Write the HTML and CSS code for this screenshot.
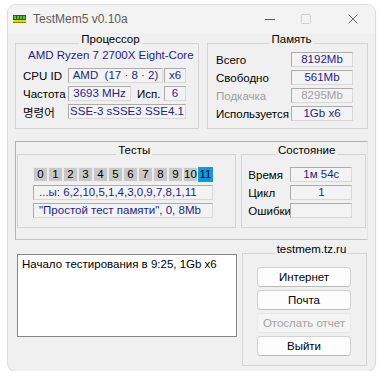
FILE: index.html
```html
<!DOCTYPE html>
<html>
<head>
<meta charset="utf-8">
<link rel="stylesheet" href="styles.css">
</head>
<body>
<div class="win">
  <div class="titlebar">
    <svg class="appicon" width="13" height="8" viewBox="0 0 13 8">
      <rect x="0" y="0" width="13" height="5" fill="#1f5f1f"/>
      <rect x="1" y="1" width="2" height="3" fill="#5fbf3f"/>
      <rect x="4" y="1" width="2" height="3" fill="#5fbf3f"/>
      <rect x="7" y="1" width="2" height="3" fill="#5fbf3f"/>
      <rect x="10" y="1" width="2" height="3" fill="#5fbf3f"/>
      <rect x="0" y="5" width="13" height="3" fill="#e6d800"/>
      <rect x="0" y="7" width="13" height="1" fill="#8a7f00"/>
    </svg>
    <span class="title">TestMem5 v0.10a</span>
    <div class="ctls">
      <span class="ctl min"><svg width="10" height="10" viewBox="0 0 10 10"><path d="M0 5.5H10" stroke="#606060" stroke-width="1"/></svg></span>
      <span class="ctl max"><svg width="10" height="10" viewBox="0 0 10 10"><rect x="0.5" y="0.5" width="9" height="9" rx="1" fill="none" stroke="#cfcfcf" stroke-width="1"/></svg></span>
      <span class="ctl close"><svg width="10" height="10" viewBox="0 0 10 10"><path d="M0.5 0.5L9.5 9.5M9.5 0.5L0.5 9.5" stroke="#707070" stroke-width="1"/></svg></span>
    </div>
  </div>

  <div class="client">
    <div class="toprow">
      <fieldset class="grp cpu">
        <legend>Процессор</legend>
        <div class="cpuname">AMD Ryzen 7 2700X Eight-Core</div>
        <div class="rows">
          <div class="row">
            <span class="lbl">CPU ID</span>
            <span class="val w95">AMD  (17 · 8 · 2)</span>
            <span class="val w22 ml1">x6</span>
          </div>
          <div class="row">
            <span class="lbl">Частота</span>
            <span class="val w63">3693 MHz</span>
            <span class="lbl2">Исп.</span>
            <span class="val w22">6</span>
          </div>
          <div class="row">
            <span class="lbl">명령어</span>
            <span class="val w118">SSE-3 sSSE3 SSE4.1</span>
          </div>
        </div>
      </fieldset>

      <fieldset class="grp mem">
        <legend>Память</legend>
        <div class="rows memrows">
          <div class="row"><span class="mlbl">Всего</span><span class="val w62">8192Mb</span></div>
          <div class="row"><span class="mlbl">Свободно</span><span class="val w62">561Mb</span></div>
          <div class="row dis"><span class="mlbl">Подкачка</span><span class="val w62">8295Mb</span></div>
          <div class="row"><span class="mlbl">Используется</span><span class="val w62">1Gb x6</span></div>
        </div>
      </fieldset>
    </div>

    <div class="midpanel">
      <fieldset class="grp tests">
        <legend>Тесты</legend>
        <div class="cells">
          <span class="cell">0</span><span class="cell">1</span><span class="cell">2</span><span class="cell">3</span><span class="cell">4</span><span class="cell">5</span><span class="cell">6</span><span class="cell">7</span><span class="cell">8</span><span class="cell">9</span><span class="cell">10</span><span class="cell on">11</span>
        </div>
        <div class="line">...ы: 6,2,10,5,1,4,3,0,9,7,8,1,11</div>
        <div class="line">&quot;Простой тест памяти&quot;, 0, 8Mb</div>
      </fieldset>

      <fieldset class="grp status">
        <legend>Состояние</legend>
        <div class="srows">
          <div class="row"><span class="slbl">Время</span><span class="val w62">1м 54с</span></div>
          <div class="row"><span class="slbl">Цикл</span><span class="val w62">1</span></div>
          <div class="row"><span class="slbl">Ошибки</span><span class="val w62"></span></div>
        </div>
      </fieldset>
    </div>

    <div class="botrow">
      <div class="log">Начало тестирования в 9:25, 1Gb x6</div>
      <fieldset class="grp links">
        <legend>testmem.tz.ru</legend>
        <div class="btns">
          <span class="btn">Интернет</span>
          <span class="btn">Почта</span>
          <span class="btn disabled">Отослать отчет</span>
          <span class="btn">Выйти</span>
        </div>
      </fieldset>
    </div>
  </div>
</div>
</body>
</html>
```

FILE: styles.css
```css
* { box-sizing: border-box; }

body {
  margin: 0;
  background: #ffffff;
  font-family: "Liberation Sans", "Noto Sans CJK KR", sans-serif;
  font-size: 11.5px;
  color: #000;
}

.win {
  margin: 5px 0 0 8px;
  width: 367px;
  height: 366px;
  background: #f0f0f0;
  border-radius: 8px;
  box-shadow: 0 0 0 1px #dcdcdc, 0 1px 4px rgba(0,0,0,0.06);
  overflow: hidden;
}

.titlebar {
  height: 28px;
  display: flex;
  align-items: center;
  background: #f3f3f3;
}

.appicon { margin-left: 5px; display: block; }

.title {
  margin-left: 7px;
  font-size: 12px;
  color: #5c5c5c;
}

.ctls {
  margin-left: auto;
  display: flex;
  height: 28px;
}

.ctl {
  display: flex;
  align-items: center;
  justify-content: center;
  height: 28px;
}
.ctl svg { display: block; }
.min { width: 36px; }
.max { width: 36px; margin-right: 6px; }
.close { width: 45px; }

.client {
  padding: 2px 7px 0 7px;
}

.grp {
  margin: 0;
  padding: 0;
  min-width: 0;
  border: 1px solid #d4d4d4;
}

.grp legend {
  margin: 0 auto;
  padding: 0 2px 8px 2px;
  line-height: 8px;
  font-size: 11.5px;
}

.toprow {
  display: flex;
  gap: 8px;
}

.cpu {
  width: 184px;
  height: 94px;
  padding: 0 0 0 7px;
}

.mem {
  width: 161px;
  height: 94px;
  padding: 0 0 0 8px;
}

.cpuname {
  margin-top: -3px;
  line-height: 14px;
  height: 14px;
  color: #1e1e8c;
  padding-left: 5px;
}

.rows {
  display: flex;
  flex-direction: column;
  gap: 3px;
  margin-top: 6px;
}

.memrows { margin-top: 1px; }

.row {
  display: flex;
  align-items: center;
  height: 15px;
}

.lbl { width: 45px; }
.lbl2 { width: 33px; padding-left: 6px; }
.mlbl { width: 75px; }
.dis .mlbl { color: #a0a0a0; }
.dis .val { color: #a0a0a0; }

.val {
  height: 15px;
  border: 1px solid #acacac;
  border-right-color: #d8d8d8;
  border-bottom-color: #d8d8d8;
  background: #f3f3f3;
  color: #1e1e8c;
  display: flex;
  align-items: center;
  justify-content: center;
  white-space: pre;
  line-height: 13px;
}

.w95 { width: 95px; }
.w22 { width: 22px; }
.w63 { width: 63px; }
.w118 { width: 118px; }
.w62 { width: 62px; }
.ml1 { margin-left: 1px; }

.midpanel {
  margin-top: 12px;
  border: 1px solid #b4b4b4;
  border-right-color: #e4e4e4;
  border-bottom-color: #c4c4c4;
  padding: 4px 1px 11px 1px;
  display: flex;
  gap: 5px;
}

.tests {
  width: 220px;
  height: 82px;
  padding: 0 0 0 15px;
}

.status {
  width: 125px;
  height: 82px;
  padding: 0 0 0 6px;
}

.cells {
  display: flex;
  width: 180px;
  height: 15px;
  margin-top: 5px;
}

.cell {
  width: 15px;
  height: 15px;
  background: #c8c8c8;
  border: 1px solid #ececec;
  display: flex;
  align-items: center;
  justify-content: center;
  line-height: 13px;
}

.cell.on {
  background: #0a9be3;
  border-color: #0a9be3;
}

.line {
  width: 180px;
  height: 15px;
  margin-top: 3px;
  border: 1px solid #acacac;
  border-right-color: #d8d8d8;
  border-bottom-color: #d8d8d8;
  background: #f3f3f3;
  color: #1e1e8c;
  padding-left: 5px;
  line-height: 13px;
  white-space: nowrap;
}

.srows {
  display: flex;
  flex-direction: column;
  gap: 3px;
  margin-top: 5px;
}

.slbl {
  width: 42px;
  white-space: nowrap;
}

.botrow {
  margin-top: 5px;
  display: flex;
  gap: 5px;
  padding-left: 2px;
}

.log {
  margin-top: 9px;
  width: 220px;
  height: 83px;
  background: #fff;
  border: 1px solid #868686;
  padding: 2px 4px;
  line-height: 14px;
  white-space: nowrap;
}

.links {
  width: 125px;
  height: 121px;
  padding: 0 0 0 14px;
}

.btns {
  display: flex;
  flex-direction: column;
  gap: 3px;
  margin-top: 6px;
}

.btn {
  width: 94px;
  height: 20px;
  background: #fdfdfd;
  border: 1px solid #d2d2d2;
  border-bottom-color: #bcbcbc;
  border-radius: 4px;
  display: flex;
  align-items: center;
  justify-content: center;
}

.btn.disabled {
  background: #f5f5f5;
  border-color: #e8e8e8;
  color: #a2a2a2;
}
```
